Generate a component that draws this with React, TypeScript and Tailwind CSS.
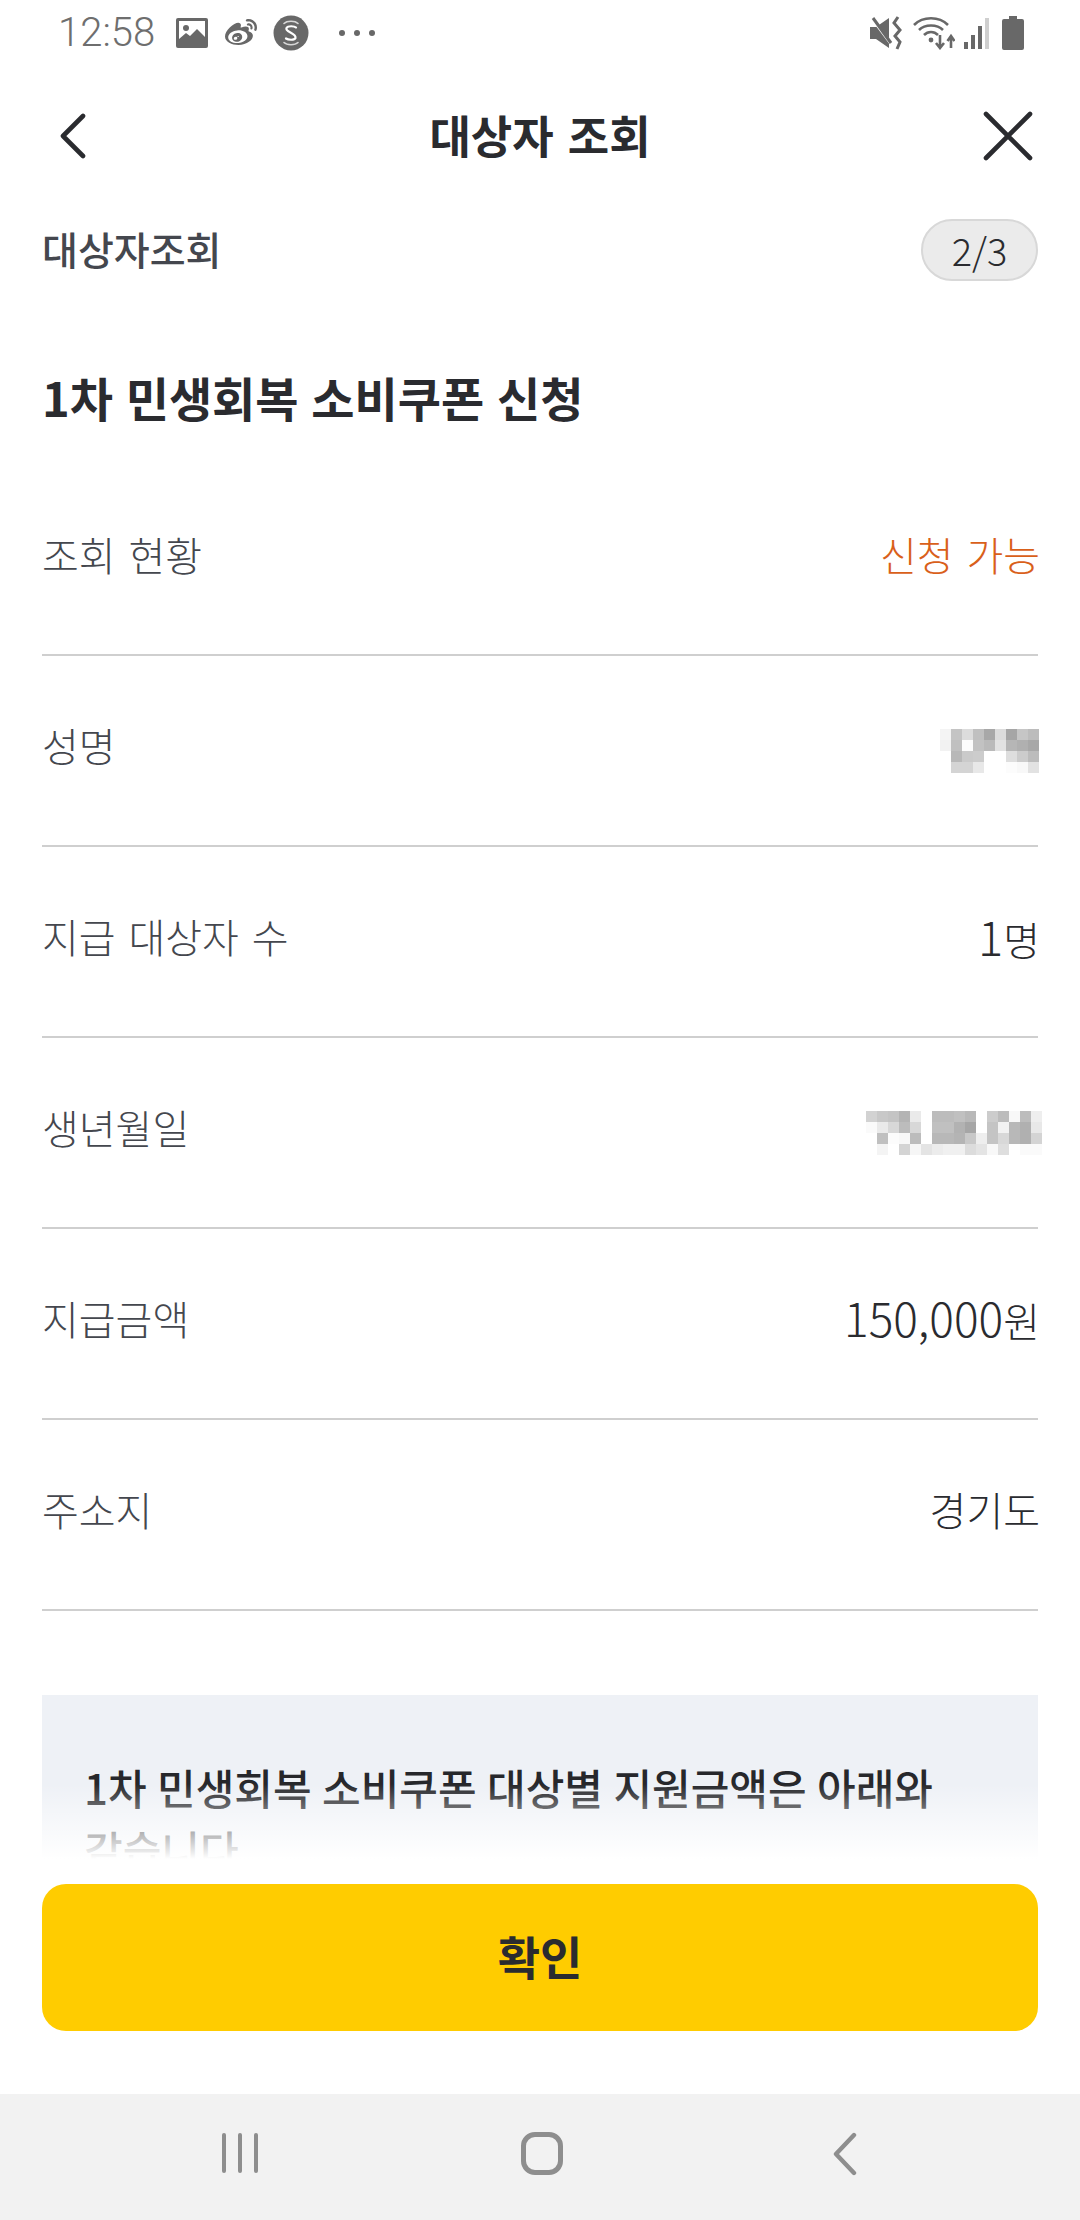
import React from 'react';
import { FaWeibo } from 'react-icons/fa';

const FONT = '[font-family:"Noto_Sans_CJK_KR","Noto_Sans",sans-serif]';

// mosaic cells copied from the censored name / birth date
const NAME_BLUR = [
  ['f4', 'c4', 'dc', 'c0', 'a8', 'dc', 'a6', 'c6', 'bc'],
  ['f2', 'c0', 'fc', 'c2', 'ba', 'e2', 'b6', 'b0', 'a8'],
  ['ff', 'b8', 'ca', 'cc', 'ff', 'ff', 'de', 'cc', 'bc'],
  ['ff', 'd4', 'd4', 'e8', 'ff', 'ff', 'fc', 'f8', 'e2'],
];
const BIRTH_BLUR = [
  ['d2', 'c8', 'c4', 'b4', 'ea', 'ff', 'bc', 'bc', 'c0', 'b8', 'ff', 'cc', 'bc', 'f8', 'bc', 'ee'],
  ['fa', 'ea', 'd8', 'bc', 'd8', 'ff', 'c0', 'c0', 'b2', 'a6', 'ff', 'c4', 'f2', 'b8', 'b0', 'e8'],
  ['ff', 'c0', 'fc', 'f8', 'bc', 'ff', 'b8', 'b8', 'b4', 'c8', 'ee', 'c4', 'd8', 'b8', 'b0', 'd4'],
  ['ff', 'f4', 'ff', 'd4', 'f6', 'e4', 'ec', 'f0', 'f0', 'dc', 'e4', 'f8', 'de', 'ff', 'fa', 'fa'],
];

const Mosaic: React.FC<{ cells: string[][] }> = ({ cells }) => (
  <div className="flex flex-col">
    {cells.map((row, y) => (
      <div key={y} className="flex">
        {row.map((c, x) => (
          <div key={x} className="w-[11px] h-[11px]" style={{ backgroundColor: `#${c}${c}${c}` }} />
        ))}
      </div>
    ))}
  </div>
);

const Row: React.FC<{ label: string; children: React.ReactNode }> = ({ label, children }) => (
  <div className="h-[191px] pt-[65px] border-b-2 border-[#cfcfcf] flex justify-between items-start">
    <span className="text-[40px] leading-[48px] font-light text-[#44474e] [word-spacing:4px]">{label}</span>
    {children}
  </div>
);

const Value: React.FC<{ children: React.ReactNode }> = ({ children }) => (
  <span className="text-[40px] leading-[48px] font-light text-[#2a2b2f] -mr-[2px]">{children}</span>
);

const StatusBar = () => (
  <div className="h-[66px] flex items-center justify-between pl-[58px] pr-[56px] text-[#686868]">
    <div className="flex items-center">
      <span className="text-[40px] leading-[44px] font-['Roboto',sans-serif] font-light w-[118px] text-[#6e6e6e]">12:58</span>
      <svg width="32" height="30" viewBox="0 0 32 30">
        <rect width="32" height="30" rx="2" fill="#686868" />
        <rect x="3" y="3" width="26" height="24" fill="#fff" />
        <circle cx="10" cy="10" r="3" fill="#686868" />
        <path d="M3 21 L10 15 L14 18 L21 11 L29 19 V27 H3 Z" fill="#686868" />
      </svg>
      <FaWeibo className="ml-[15px] w-[36px] h-[32px]" />
      <svg className="ml-[14px]" width="36" height="36" viewBox="0 0 36 36" fill="none">
        <circle cx="18" cy="18" r="17.5" fill="#686868" />
        <path d="M23 12.5 C21.5 11 15 10.5 13.5 13 C11.5 17 23.5 18 22.5 23 C21.5 25.5 15 25 13 23.5" stroke="#fff" strokeWidth="2.2" strokeLinecap="round" />
        <path d="M11 8.5 C14 5.5 22 5.5 25 8.5 M11 27.5 C14 30.5 22 30.5 25 27.5" stroke="#d8d8d8" strokeWidth="1.6" strokeLinecap="round" />
      </svg>
      <div className="ml-[30px] flex gap-[9px]">
        <span className="w-[6px] h-[6px] rounded-full bg-[#686868]" />
        <span className="w-[6px] h-[6px] rounded-full bg-[#686868]" />
        <span className="w-[6px] h-[6px] rounded-full bg-[#686868]" />
      </div>
    </div>
    <div className="flex items-center">
      <svg width="32" height="34" viewBox="0 0 32 34" fill="none">
        <path d="M0 11 H6 L19 2 V32 L6 23 H0 Z" fill="#686868" />
        <path d="M4 5 L22 29" stroke="#fff" strokeWidth="3" />
        <path d="M3 2 L21 27" stroke="#686868" strokeWidth="3" />
        <path d="M28 1 L24 7 L30 14 L25 20 L30 26 L27 33" stroke="#686868" strokeWidth="3" />
      </svg>
      <svg className="ml-[11px]" width="42" height="34" viewBox="0 0 42 34" fill="none" stroke="#686868" strokeWidth="2.6">
        <path d="M1 9 C10 0 26 0 35 9" />
        <path d="M6 14 C12 8 24 8 30 14" />
        <path d="M11 19 C15 15 21 15 25 19" />
        <circle cx="18" cy="24" r="2.4" fill="#686868" stroke="none" />
        <path d="M27 19 V32 M23 27 L27 32 L31 27" />
        <path d="M38 32 V21 M34.5 25 L38 20 L41.5 25" />
      </svg>
      <div className="ml-[9px] flex items-end gap-[3px] h-[32px]">
        <span className="w-[4px] h-[7px] bg-[#686868]" />
        <span className="w-[4px] h-[14px] bg-[#686868]" />
        <span className="w-[4px] h-[23px] bg-[#686868]" />
        <span className="w-[4px] h-[31px] bg-[#cfcfcf]" />
      </div>
      <svg className="ml-[13px]" width="22" height="34" viewBox="0 0 22 34">
        <path d="M7 0 H15 V3 H20 A2 2 0 0 1 22 5 V32 A2 2 0 0 1 20 34 H2 A2 2 0 0 1 0 32 V5 A2 2 0 0 1 2 3 H7 Z" fill="#686868" />
      </svg>
    </div>
  </div>
);

export default function App() {
  return (
    <div className={`w-[1080px] h-[2220px] bg-white flex flex-col overflow-hidden ${FONT}`}>
      <StatusBar />

      <div className="h-[140px] grid grid-cols-[1fr_auto_1fr] items-center">
        <svg className="ml-[58px]" width="30" height="46" viewBox="0 0 30 46" fill="none">
          <path d="M25 3 L5 23 L25 43" stroke="#2a2b2f" strokeWidth="4.6" strokeLinecap="round" strokeLinejoin="round" />
        </svg>
        <h1 className="text-[45px] leading-[56px] font-bold text-[#2a2b2f] mb-[2px] [word-spacing:4px]">대상자 조회</h1>
        <svg className="justify-self-end mr-[46px]" width="52" height="52" viewBox="0 0 52 52" fill="none">
          <path d="M4 4 L48 48 M48 4 L4 48" stroke="#2a2b2f" strokeWidth="4.6" strokeLinecap="round" />
        </svg>
      </div>

      <div className="relative flex-1 overflow-hidden px-[42px]">
        <div className="flex items-center justify-between h-[62px] mt-[13px]">
          <span className="text-[39px] leading-[48px] font-medium text-[#44474e] mb-[5px]">대상자조회</span>
          <span className="w-[117px] h-[62px] rounded-full bg-[#ebebeb] border-2 border-[#d8d8d8] flex items-center justify-center text-[38px] leading-none font-light text-[#2a2b2f]">2/3</span>
        </div>

        <h2 className="mt-[86px] text-[47px] leading-[60px] font-bold text-[#2a2b2f] [word-spacing:2px]">1차 민생회복 소비쿠폰 신청</h2>

        <div className="mt-[38px]">
          <Row label="조회 현황">
            <span className="text-[40px] leading-[48px] font-light text-[#d9601a] -mr-[2px] [word-spacing:4px]">신청 가능</span>
          </Row>
          <Row label="성명">
            <div className="-mr-[1px] mt-[8px]">
              <Mosaic cells={NAME_BLUR} />
            </div>
          </Row>
          <Row label="지급 대상자 수">
            <Value>
              <span className="text-[47px] leading-none">1</span>명
            </Value>
          </Row>
          <Row label="생년월일">
            <div className="-mr-[4px] mt-[8px]">
              <Mosaic cells={BIRTH_BLUR} />
            </div>
          </Row>
          <Row label="지급금액">
            <Value>
              <span className="text-[46px] leading-none">150,000</span>원
            </Value>
          </Row>
          <Row label="주소지">
            <Value>경기도</Value>
          </Row>
        </div>

        <div className="mt-[84px] bg-[#eef1f6] px-[42px] pt-[61px] pb-[60px]">
          <p className="text-[42px] leading-[62px] font-medium text-[#26272b] break-keep [word-spacing:1px]">
            1차 민생회복 소비쿠폰 대상별 지원금액은 아래와 같습니다
          </p>
        </div>

        {/* fade above the fixed button */}
        <div className="absolute left-0 right-0 bottom-0 h-[100px] bg-gradient-to-b from-white/0 to-white to-75%" />
      </div>

      <div className="h-[210px] px-[42px]">
        <button className="w-full h-[147px] rounded-[24px] bg-[#ffcc00] text-[46px] font-bold text-[#2a2b2f] pb-[5px]">확인</button>
      </div>

      <div className="h-[126px] bg-[#f2f2f2] relative">
        <div className="absolute left-[222px] top-[39px] flex gap-[12px]">
          <span className="w-[4px] h-[40px] rounded-full bg-[#8e8e8e]" />
          <span className="w-[4px] h-[40px] rounded-full bg-[#8e8e8e]" />
          <span className="w-[4px] h-[40px] rounded-full bg-[#8e8e8e]" />
        </div>
        <div className="absolute left-[521px] top-[38px] w-[42px] h-[43px] rounded-[14px] border-[5px] border-[#8e8e8e]" />
        <svg className="absolute left-[832px] top-[38px]" width="26" height="44" viewBox="0 0 26 44" fill="none">
          <path d="M22 3 L4 22 L22 41" stroke="#8e8e8e" strokeWidth="4.4" strokeLinecap="round" strokeLinejoin="round" />
        </svg>
      </div>
    </div>
  );
}
